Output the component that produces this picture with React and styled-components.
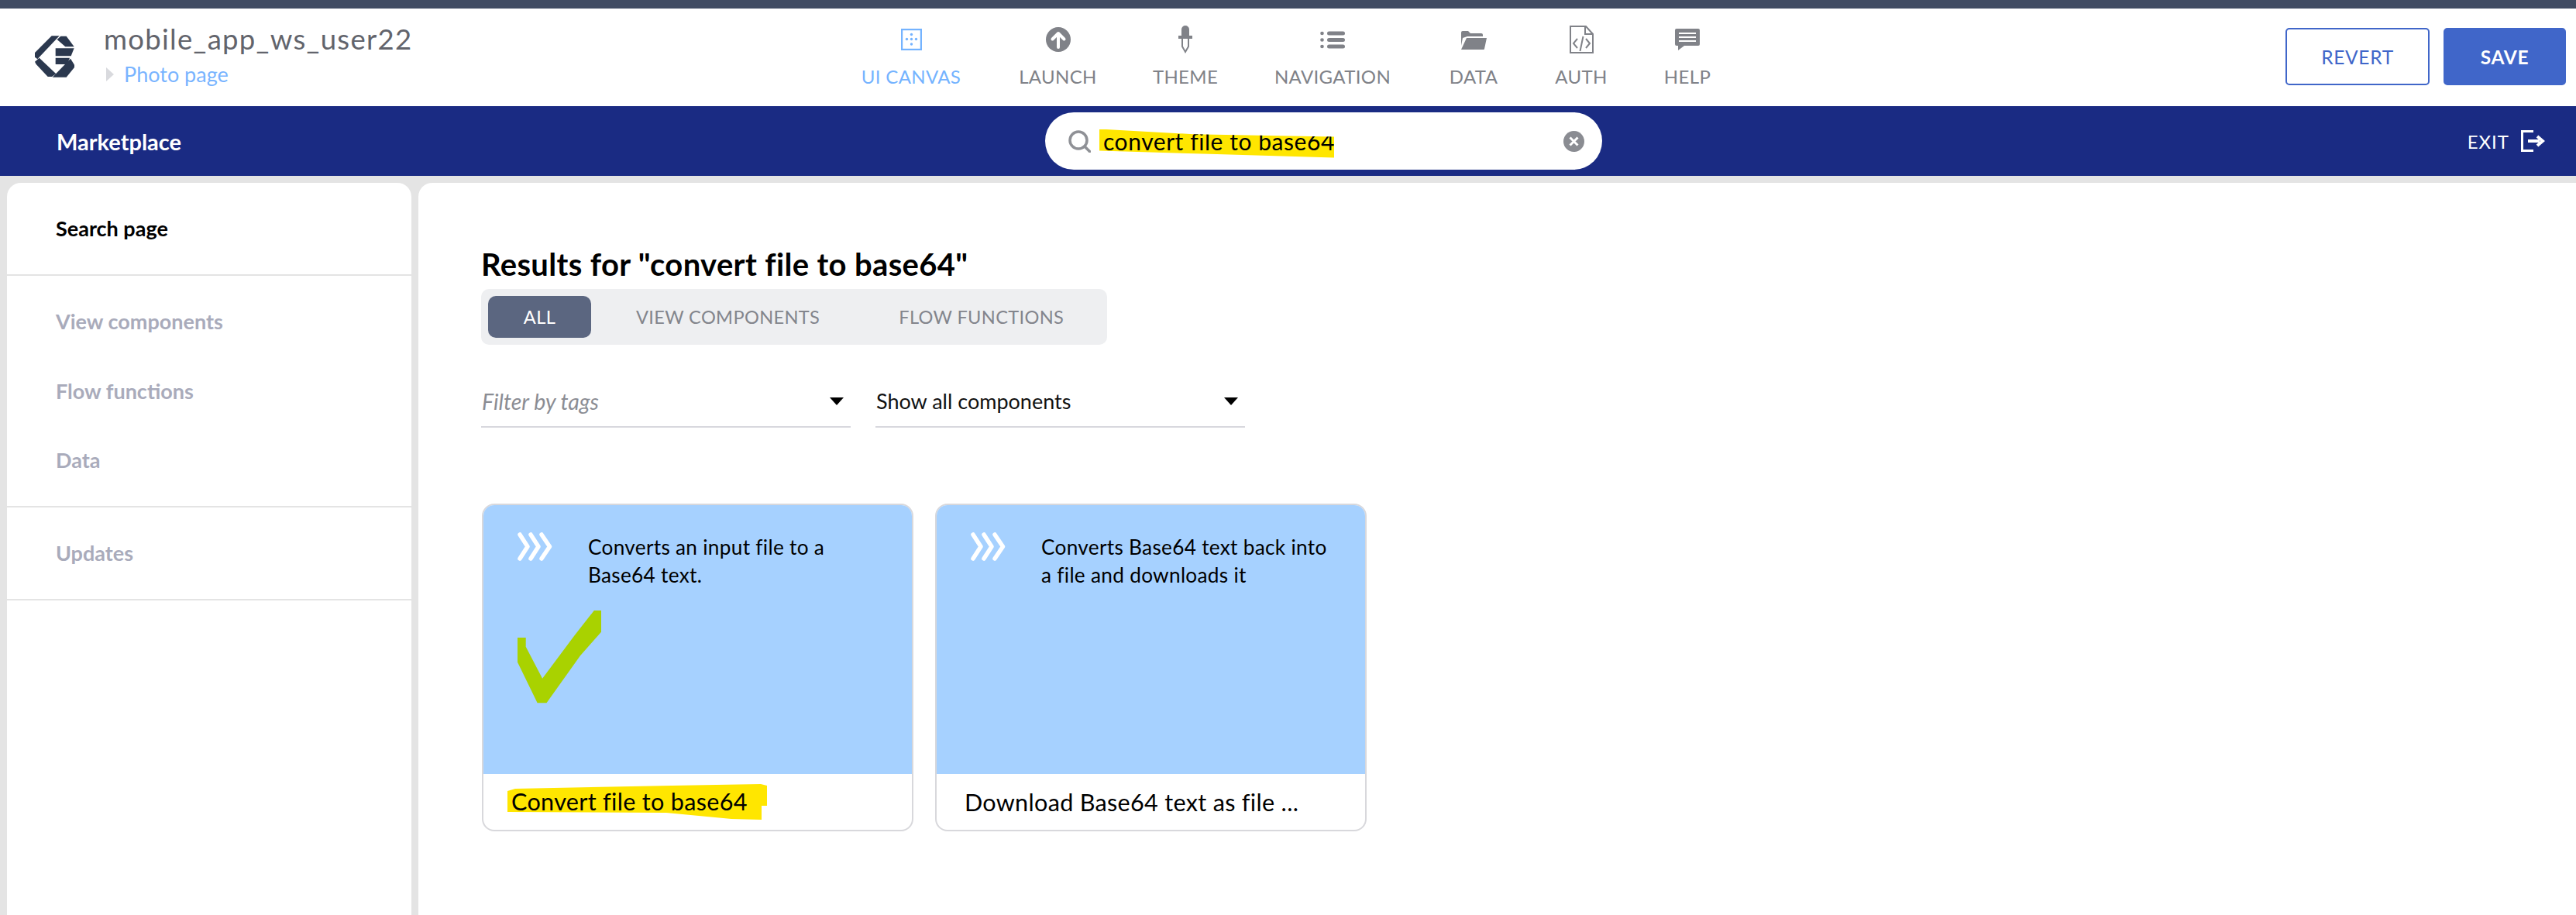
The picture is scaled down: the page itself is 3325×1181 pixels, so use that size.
import React from 'react';
import styled, { createGlobalStyle } from 'styled-components';

const Global = createGlobalStyle`
  html, body { margin: 0; padding: 0; width: 3325px; height: 1181px; overflow: hidden; background: #e4e4e4; }
  * { box-sizing: border-box; }
  body { font-family: Lato, "Open Sans", sans-serif; }
`;

const Page = styled.div`
  width: 3325px; height: 1181px; display: flex; flex-direction: column; border-top: 11px solid #414c63;
`;
const Header = styled.header`
  height: 126px; flex: none; background: #fff; display: flex; align-items: flex-start; padding-left: 45px;
`;
const Brand = styled.div`
  width: 1065px; flex: none; display: flex; gap: 38px; padding-top: 21px;
`;
const LogoSvg = styled.svg`
  width: 51px; height: 54px; flex: none; margin-top: 14px;
`;
const BrandText = styled.div`
  display: flex; flex-direction: column;
`;
const AppName = styled.div`
  font-size: 36.5px; line-height: 36px; color: #62646c; letter-spacing: 1.3px;
`;
const PageCrumb = styled.div`
  display: flex; align-items: center; margin-top: 12px; margin-left: 3px; gap: 13px;
  font-size: 27px; line-height: 32px; color: #79b4ff;
`;
const CrumbArrow = styled.span`
  width: 0; height: 0; border-left: 10px solid #d9dade; border-top: 9px solid transparent; border-bottom: 9px solid transparent;
`;
const Nav = styled.nav`
  display: flex; gap: 73px; padding-top: 22px;
`;
const NavItem = styled.div`
  width: ${p => p.$w}px; display: flex; flex-direction: column; align-items: center; color: ${p => p.$active ? '#74b3ff' : '#808288'};
`;
const IconSlot = styled.div`
  height: 36px; display: flex; align-items: center; justify-content: center; margin-bottom: 16px;
`;
const NavLabel = styled.div`
  font-size: 24px; line-height: 28px; white-space: nowrap; letter-spacing: .35px;
`;
const Actions = styled.div`
  margin-left: auto; display: flex; gap: 18px; padding: 25px 13px 0 0;
`;
const Button = styled.button`
  height: 74px; width: ${p => p.$w}px; border-radius: 5px; border: 2px solid #4066c9;
  background: ${p => p.$solid ? '#4066c9' : '#fff'}; color: ${p => p.$solid ? '#fff' : '#4066c9'};
  font-family: inherit; font-size: 24.5px; letter-spacing: .7px; font-weight: ${p => p.$solid ? 700 : 400};
`;
const Bar = styled.div`
  height: 90px; flex: none; background: #1a2b83; color: #fff; display: flex; align-items: center; padding: 0 40px 0 73px;
`;
const BarTitle = styled.div`
  width: 1276px; flex: none; font-size: 29px; font-weight: 700;
`;
const SearchBox = styled.div`
  width: 719px; height: 74px; flex: none; border-radius: 37px; background: #fff; display: flex; align-items: center; padding: 0 23px 0 30px;
`;
const SearchText = styled.span`
  display: block; width: 303px; height: 37px; margin-left: 11px; padding-left: 5px; margin-top: 6px;
  background: #ffe600; color: #000; font-size: 30px; line-height: 31px; white-space: nowrap; letter-spacing: .55px;
  clip-path: polygon(0 0, 40% 18%, 100% 27%, 100% 100%, 50% 88%, 0 76%);
`;
const Clear = styled.svg`
  width: 27px; height: 27px; margin-left: auto;
`;
const Exit = styled.div`
  margin-left: auto; display: flex; align-items: center; gap: 15px; font-size: 24px; letter-spacing: 1px;
`;
const Body = styled.div`
  flex: 1; display: flex; gap: 9px; padding: 9px 0 0 9px; min-height: 0;
`;
const Side = styled.aside`
  width: 522px; flex: none; background: #fff; border-radius: 18px 18px 0 0;
`;
const SideSection = styled.div`
  padding: 15px 0 13.5px 63px; border-bottom: 2px solid #e4e4e4;
`;
const SideItem = styled.div`
  height: 89.5px; display: flex; align-items: center; padding-bottom: 2px; font-size: 27px; font-weight: 700; color: ${p => p.$active ? '#000' : '#a9abbb'};
`;
const Main = styled.main`
  flex: 1; background: #fff; border-radius: 18px 0 0 0; padding: 83px 0 0 82px;
`;
const Title = styled.h1`
  margin: 0 0 0 -1px; font-size: 40px; line-height: 44px; font-weight: 700; color: #000; letter-spacing: .35px;
`;
const Tabs = styled.div`
  width: 808px; height: 72px; margin: 10px 0 0 -1px; background: #eeeff1; border-radius: 10px; padding: 9px; display: flex; gap: 14px;
`;
const Tab = styled.div`
  height: 54px; flex: none; white-space: nowrap; display: flex; align-items: center; justify-content: center; font-size: 23.6px; letter-spacing: .35px;
  border-radius: 10px; padding: ${p => p.$active ? '0' : '0 44px'}; width: ${p => p.$active ? '133px' : 'auto'};
  background: ${p => p.$active ? '#5b6680' : 'transparent'}; color: ${p => p.$active ? '#fff' : '#83858c'};
`;
const Filters = styled.div`
  display: flex; gap: 32px; margin: 50px 0 0 -1px;
`;
const Select = styled.div`
  width: 477px; height: 57px; border-bottom: 2px solid #d8d8de; display: flex; align-items: center; justify-content: space-between; padding: 0 9px 10px 1px;
  font-size: ${p => p.$placeholder ? '28.5px' : '27px'}; color: ${p => p.$placeholder ? '#8b8d94' : '#111'}; font-style: ${p => p.$placeholder ? 'italic' : 'normal'};
`;
const Caret = styled.span`
  width: 0; height: 0; border-top: 10px solid #000; border-left: 9px solid transparent; border-right: 9px solid transparent;
`;
const Cards = styled.div`
  display: flex; gap: 28px; margin-top: 98px;
`;
const Card = styled.article`
  width: 557px; height: 423px; border: 2px solid #d8d8dc; border-radius: 16px; overflow: hidden; display: flex; flex-direction: column;
`;
const CardTop = styled.div`
  position: relative; height: 347px; flex: none; background: #a6d1ff; display: flex; gap: 46px; padding: 35px 0 0 44px;
`;
const Chevrons = styled.svg`
  width: 45px; height: 37px; flex: none;
`;
const CardText = styled.p`
  margin: 1px 0 0; width: 380px; font-size: 26.2px; line-height: 36px; color: #000; letter-spacing: .3px;
`;
const Check = styled.svg`
  position: absolute; left: 44px; top: 136px; width: 108px; height: 120px;
`;
const CardFoot = styled.div`
  flex: 1; display: flex; align-items: center; padding-left: 36px; font-size: 30.6px; color: #000; letter-spacing: .3px;
`;
const MarkedTitle = styled.span`
  display: block; width: 335px; height: 46px; margin-left: -5px; padding-left: 5px; line-height: 46px; background: #ffe600; white-space: nowrap;
  clip-path: polygon(0 9px, 10px 6px, 212px 2px, 327px 0, 335px 2px, 335px 28px, 328px 28px, 328px 46px, 289px 45px, 205px 37px, 0 36px);
`;

const Logo = () => (
  <LogoSvg viewBox="0 0 153 160" fill="#2b384e">
    <polygon points="65,0 95,0 10,90 0,82 0,65" />
    <polygon points="17,85 82,147 66,158 50,158 5,110 0,100" />
    <polygon points="86,14 100,1 122,1 152,42 118,42" />
    <polygon points="80,48 152,48 140,78 80,78" />
    <polygon points="80,85 135,85 125,110 80,110" />
    <polygon points="138,88 153,112 153,122 122,160 68,160" />
  </LogoSvg>
);
const CanvasIcon = () => (
  <svg width="27" height="28" viewBox="0 0 27 28">
    <rect x="1" y="1" width="25" height="26" fill="none" stroke="currentColor" strokeWidth="2.4" />
    <g fill="currentColor"><circle cx="13.5" cy="7.5" r="1.7" /><circle cx="13.5" cy="13.5" r="1.7" /><circle cx="13.5" cy="20" r="1.7" /><circle cx="7.5" cy="13.5" r="1.7" /><circle cx="19.5" cy="13.5" r="1.7" /></g>
  </svg>
);
const LaunchIcon = () => (
  <svg width="32" height="32" viewBox="0 0 32 32">
    <circle cx="16" cy="16" r="16" fill="currentColor" />
    <path d="M16 26V9M8.5 15.5L16 8l7.500 7.500" fill="none" stroke="#fff" strokeWidth="4" strokeLinecap="round" strokeLinejoin="round" />
  </svg>
);
const ThemeIcon = () => (
  <svg width="18" height="36" viewBox="0 0 18 36">
    <path d="M4 13V5a5 5 0 0 1 10 0v8h4v4H0v-4z" fill="currentColor" />
    <path d="M5 17v10l4 7 4-7V17" fill="none" stroke="currentColor" strokeWidth="2" />
  </svg>
);
const ListIcon = () => (
  <svg width="32" height="23" viewBox="0 0 32 23" fill="currentColor">
    <circle cx="2.500" cy="3" r="2.300" /><circle cx="2.500" cy="11.500" r="2.300" /><circle cx="2.500" cy="20" r="2.300" />
    <rect x="9" y="0.500" width="23" height="5" rx="2.500" /><rect x="9" y="9" width="23" height="5" rx="2.500" /><rect x="9" y="17.500" width="23" height="5" rx="2.500" />
  </svg>
);
const FolderIcon = () => (
  <svg width="33" height="25" viewBox="0 0 33 25" fill="currentColor">
    <path d="M0 3a2 2 0 0 1 2-2h7l3 3h14a2 2 0 0 1 2 2v2H8L2 10 0 20z" />
    <path d="M7 10h26l-3 14a1 1 0 0 1-1 1H0z" />
  </svg>
);
const AuthIcon = () => (
  <svg width="31" height="36" viewBox="0 0 31 36" fill="none" stroke="currentColor" strokeWidth="2">
    <path d="M1 1h20l9 10v24H1z" />
    <path d="M20 1v10h10" />
    <path d="M10 17l-5 6 5 6M21 17l5 6-5 6M17.500 14l-4 19" strokeWidth="2" />
  </svg>
);
const HelpIcon = () => (
  <svg width="32" height="28" viewBox="0 0 32 28">
    <path d="M2 0h28a2 2 0 0 1 2 2v18a2 2 0 0 1-2 2H12L4 28v-6H2a2 2 0 0 1-2-2V2a2 2 0 0 1 2-2z" fill="currentColor" />
    <path d="M5 6h22M5 11h22M5 16h22" stroke="#fff" strokeWidth="2" />
  </svg>
);
const SearchGlyph = styled.svg`
  width: 29px; height: 29px; flex: none;
`;
const SearchIcon = () => (
  <SearchGlyph viewBox="0 0 29 29" fill="none" stroke="#8f9196" strokeWidth="3.500">
    <circle cx="13" cy="13" r="11" />
    <path d="M21 21l6.500 6.500" strokeLinecap="round" />
  </SearchGlyph>
);
const ExitIcon = () => (
  <svg width="31" height="28" viewBox="0 0 31 28" fill="none" stroke="#fff">
    <path d="M16 1.500H1.500v25H16" strokeWidth="3" />
    <path d="M9 14h15" strokeWidth="4" />
    <path d="M21 8l7 6-7 6" strokeWidth="4" />
  </svg>
);
const ChevronMark = () => (
  <Chevrons viewBox="0 0 45 37" fill="none" stroke="#fff" strokeWidth="5.500" strokeLinecap="round" strokeLinejoin="round">
    <path d="M3 3l10 15.500L3 34M17 3l10 15.500L17 34M31 3l10.500 15.500L31 34" />
  </Chevrons>
);

const navItems = [
  ['UI CANVAS', CanvasIcon, 132, true], ['LAUNCH', LaunchIcon, 101], ['THEME', ThemeIcon, 82], ['NAVIGATION', ListIcon, 152],
  ['DATA', FolderIcon, 66], ['AUTH', AuthIcon, 66], ['HELP', HelpIcon, 62],
];

export default function App() {
  return (
    <Page>
      <Global />
      <Header>
        <Brand>
          <Logo />
          <BrandText>
            <AppName>mobile_app_ws_user22</AppName>
            <PageCrumb><CrumbArrow />Photo page</PageCrumb>
          </BrandText>
        </Brand>
        <Nav>
          {navItems.map(([label, Icon, width, active]) => (
            <NavItem key={label} $w={width} $active={active}>
              <IconSlot><Icon /></IconSlot>
              <NavLabel>{label}</NavLabel>
            </NavItem>
          ))}
        </Nav>
        <Actions>
          <Button $w={186}>REVERT</Button>
          <Button $w={158} $solid>SAVE</Button>
        </Actions>
      </Header>
      <Bar>
        <BarTitle>Marketplace</BarTitle>
        <SearchBox>
          <SearchIcon />
          <SearchText>convert file to base64</SearchText>
          <Clear viewBox="0 0 27 27">
            <circle cx="13.500" cy="13.500" r="13.500" fill="#8a8c92" />
            <path d="M8.500 8.500l10 10M18.500 8.500l-10 10" stroke="#fff" strokeWidth="3" />
          </Clear>
        </SearchBox>
        <Exit>EXIT<ExitIcon /></Exit>
      </Bar>
      <Body>
        <Side>
          <SideSection><SideItem $active>Search page</SideItem></SideSection>
          <SideSection>
            <SideItem>View components</SideItem>
            <SideItem>Flow functions</SideItem>
            <SideItem>Data</SideItem>
          </SideSection>
          <SideSection><SideItem>Updates</SideItem></SideSection>
        </Side>
        <Main>
          <Title>Results for "convert file to base64"</Title>
          <Tabs>
            <Tab $active>ALL</Tab>
            <Tab>VIEW COMPONENTS</Tab>
            <Tab>FLOW FUNCTIONS</Tab>
          </Tabs>
          <Filters>
            <Select $placeholder>Filter by tags<Caret /></Select>
            <Select>Show all components<Caret /></Select>
          </Filters>
          <Cards>
            <Card>
              <CardTop>
                <ChevronMark />
                <CardText>Converts an input file to a Base64 text.</CardText>
                <Check viewBox="0 0 108 120">
                  <polygon fill="#a9d200" points="0,35 10.700,35 10.700,46.700 32.100,87.700 73.500,32.300 98.800,0 108,0 108,27.700 81,58.300 37.500,119.300 25.600,119.300 6.500,80 0,66.700" />
                </Check>
              </CardTop>
              <CardFoot><MarkedTitle>Convert file to base64</MarkedTitle></CardFoot>
            </Card>
            <Card>
              <CardTop>
                <ChevronMark />
                <CardText>Converts Base64 text back into a file and downloads it</CardText>
              </CardTop>
              <CardFoot>Download Base64 text as file ...</CardFoot>
            </Card>
          </Cards>
        </Main>
      </Body>
    </Page>
  );
}
